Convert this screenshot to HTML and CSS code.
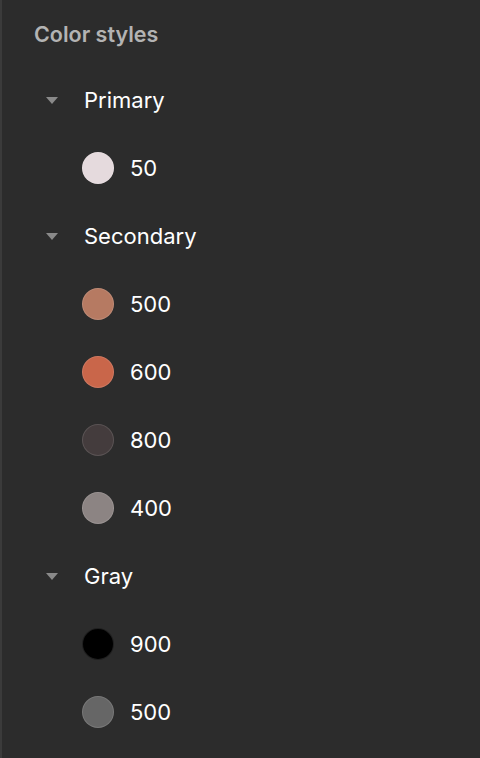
FILE: index.html
```html
<!DOCTYPE html>
<html lang="en">
<head>
    <meta charset="UTF-8">
    <meta name="viewport" content="width=device-width, initial-scale=1.0">
    <title>Color styles</title>
    <link rel="stylesheet" href="styles.css">
</head>
<body>
    <div class="panel">
        <h2 class="panel-title">Color styles</h2>

        <div class="group">
            <div class="group-header"><span class="caret"></span>Primary</div>
            <div class="swatch-row"><span class="swatch c-primary-50"></span>50</div>
        </div>

        <div class="group">
            <div class="group-header"><span class="caret"></span>Secondary</div>
            <div class="swatch-row"><span class="swatch c-secondary-500"></span>500</div>
            <div class="swatch-row"><span class="swatch c-secondary-600"></span>600</div>
            <div class="swatch-row"><span class="swatch c-secondary-800"></span>800</div>
            <div class="swatch-row"><span class="swatch c-secondary-400"></span>400</div>
        </div>

        <div class="group">
            <div class="group-header"><span class="caret"></span>Gray</div>
            <div class="swatch-row"><span class="swatch c-gray-900"></span>900</div>
            <div class="swatch-row"><span class="swatch c-gray-500"></span>500</div>
        </div>
    </div>
</body>
</html>
```

FILE: styles.css
```css
html, body {
    margin: 0;
    padding: 0;
    height: 100%;
}
body {
    font-family: 'Inter', 'Noto Sans', sans-serif;
    background-color: #2c2c2c;
    color: #ffffff;
}
.panel {
    min-height: 100%;
    box-sizing: border-box;
    border-left: 2px solid #3b3b3b;
    padding: 20px 0 0 32px;
}
.panel-title {
    margin: 0 0 18px 0;
    height: 28px;
    line-height: 28px;
    font-size: 21.5px;
    font-weight: 600;
    color: #b3b3b3;
}
.group-header,
.swatch-row {
    display: flex;
    align-items: center;
    height: 68px;
    font-size: 22px;
}
.group-header {
    padding-left: 12px;
}
.caret {
    width: 0;
    height: 0;
    border-left: 6px solid transparent;
    border-right: 6px solid transparent;
    border-top: 7px solid #8a8a8a;
    margin-right: 26px;
}
.swatch-row {
    padding-left: 48px;
}
.swatch {
    width: 32px;
    height: 32px;
    border-radius: 50%;
    box-sizing: border-box;
    border: 1px solid rgba(255, 255, 255, 0.12);
    margin-right: 16px;
}
.c-primary-50 { background-color: #e5dadd; }
.c-secondary-500 { background-color: #b67a62; }
.c-secondary-600 { background-color: #c9664a; }
.c-secondary-800 { background-color: #443c3d; }
.c-secondary-400 { background-color: #8c8483; }
.c-gray-900 { background-color: #000000; }
.c-gray-500 { background-color: #666666; }
```
